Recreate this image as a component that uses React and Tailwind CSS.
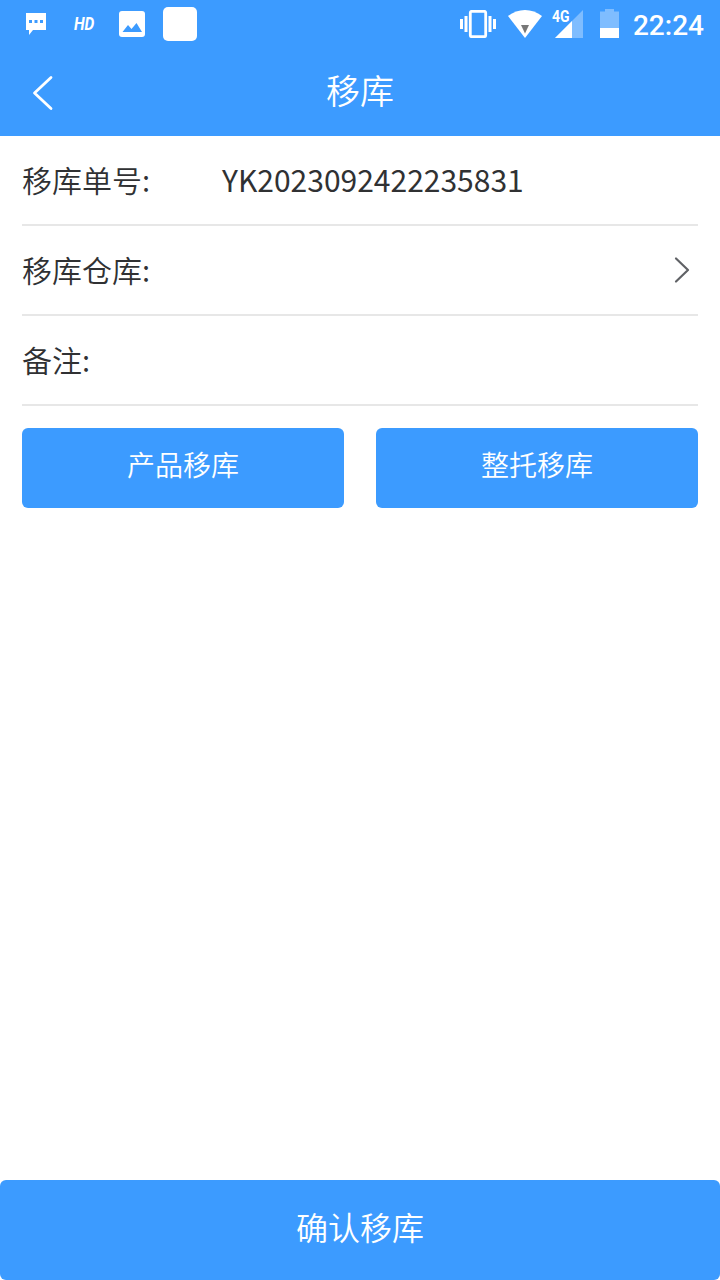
import React from "react";

const fields = [
  { label: "移库单号:", value: "YK2023092422235831" },
  { label: "移库仓库:", value: "", arrow: true },
  { label: "备注:", value: "" },
];

const actions = ["产品移库", "整托移库"];

const StatusBar = () => (
  <div className="h-12 flex items-center justify-between pl-[26px] pr-4">
    <div className="flex items-center">
      {/* Message */}
      <svg width="20" height="22" viewBox="0 0 20 22" fill="#fff">
        <path
          fillRule="evenodd"
          d="M0 0H20V17H7L3 22V17H0ZM3 7V10H6V7ZM8.5 7V10H11.5V7ZM14 7V10H17V7Z"
        />
      </svg>
      <span className="w-[22px] ml-7 text-[18px] leading-none font-bold italic origin-left scale-x-[0.86] font-['Roboto',sans-serif]">
        HD
      </span>
      {/* Gallery */}
      <svg className="ml-[23px]" width="26" height="26" viewBox="0 0 26 26">
        <rect width="26" height="26" rx="3" fill="#fff" />
        <path d="M3.5 21L9 14L12.5 18L17.5 12L23 21Z" fill="#3c9bff" />
      </svg>
      <div className="w-[34px] h-[34px] ml-[18px] rounded-[5px] bg-white" />
    </div>

    <div className="flex items-center">
      {/* Vibrate */}
      <svg width="36" height="28" viewBox="0 0 36 28" fill="#fff">
        <rect x="10.3" y="1.3" width="15.4" height="25.4" rx="1.5" fill="none" stroke="#fff" strokeWidth="2.8" />
        <rect x="0" y="9" width="3" height="10" />
        <rect x="4.5" y="6" width="3" height="16" />
        <rect x="28.5" y="6" width="3" height="16" />
        <rect x="33" y="9" width="3" height="10" />
      </svg>
      {/* Wifi */}
      <svg className="ml-3" width="34" height="28" viewBox="0 0 34 28">
        <path d="M0 6C10 -2 24 -2 34 6L17 28Z" fill="#fff" />
        <path d="M13 15H21L17 23.5Z" fill="#777" />
      </svg>
      {/* Signal */}
      <div className="relative w-[32px] h-[30px] ml-[10px]">
        <svg width="32" height="30" viewBox="0 0 32 30">
          <path d="M31 1V29H3Z" fill="#7fbdff" />
          <path d="M20 12V29H3Z" fill="#fff" />
          <path d="M0 0H19V12H0Z" fill="#3c9bff" />
        </svg>
        <span className="absolute left-0 -top-px text-[17px] leading-none font-bold origin-left scale-x-[0.82] font-['Roboto',sans-serif]">
          4G
        </span>
      </div>
      {/* Battery */}
      <svg className="ml-4 mb-px" width="19" height="29" viewBox="0 0 19 29">
        <path d="M5 0H14V2.5H19V19H0V2.5H5Z" fill="#7fbdff" />
        <rect y="19" width="19" height="10" fill="#fff" />
      </svg>
      <span className="ml-[14px] mt-[3px] text-[28px] leading-none font-medium font-['Roboto',sans-serif]">
        22:24
      </span>
    </div>
  </div>
);

const App = () => {
  return (
    <div className="w-[720px] h-[1280px] flex flex-col bg-white text-[#303133] font-[350] font-['Noto_Sans_CJK_SC',sans-serif]">
      <header className="h-[136px] bg-[#3c9bff] text-white">
        <StatusBar />
        {/* Title bar */}
        <div className="h-[88px] grid grid-cols-[1fr_auto_1fr] items-center">
          <svg className="ml-8 mt-[2px]" width="22" height="36" viewBox="0 0 22 36" fill="none">
            <path d="M19 2.5L2.5 18L19 33.5" stroke="#fff" strokeWidth="2.8" strokeLinecap="round" strokeLinejoin="round" />
          </svg>
          <h1 className="pb-[5px] text-[34px] leading-[50px] font-[350]">移库</h1>
        </div>
      </header>

      <main className="flex-1 px-[22px]">
        {fields.map((field) => (
          <div
            key={field.label}
            className="h-[90px] flex items-center border-b-2 border-[#e7e7e7] text-[30px]"
          >
            <span className="w-[200px] pb-[2px]">{field.label}</span>
            <span className="flex-1 pb-[2px] font-normal">{field.value}</span>
            {field.arrow && (
              <svg className="mr-2" width="16" height="28" viewBox="0 0 16 28" fill="none">
                <path d="M2 2.5L14 14L2 25.5" stroke="#606266" strokeWidth="2.2" strokeLinecap="round" strokeLinejoin="round" />
              </svg>
            )}
          </div>
        ))}

        <div className="grid grid-cols-2 gap-8 mt-[22px]">
          {actions.map((text) => (
            <button
              key={text}
              className="h-20 pb-2 rounded-md bg-[#3c9bff] text-white text-[28px]"
            >
              {text}
            </button>
          ))}
        </div>
      </main>

      <button className="h-[100px] pb-2 rounded-md bg-[#3c9bff] text-white text-[32px]">
        确认移库
      </button>
    </div>
  );
};

export default App;
